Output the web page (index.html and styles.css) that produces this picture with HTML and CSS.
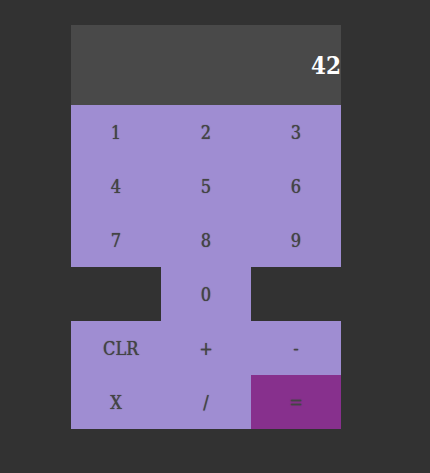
FILE: index.html
```html
<!DOCTYPE html>
<html lang="en">
<head>
<meta charset="utf-8">
<meta name="viewport" content="width=device-width, initial-scale=1">
<title>Calculator</title>
<link rel="stylesheet" href="styles.css">
</head>
<body>
<main class="calculator">
  <output class="display" aria-label="Result">42</output>
  <div class="keys">
    <button class="key" type="button">1</button>
    <button class="key" type="button">2</button>
    <button class="key" type="button">3</button>
    <button class="key" type="button">4</button>
    <button class="key" type="button">5</button>
    <button class="key" type="button">6</button>
    <button class="key" type="button">7</button>
    <button class="key" type="button">8</button>
    <button class="key" type="button">9</button>
    <button class="key key-zero" type="button">0</button>
    <button class="key key-clear" type="button">CLR</button>
    <button class="key" type="button">+</button>
    <button class="key" type="button">-</button>
    <button class="key" type="button">X</button>
    <button class="key" type="button">/</button>
    <button class="key key-equals" type="button">=</button>
  </div>
</main>
</body>
</html>
```
FILE: styles.css
```css
* {
  box-sizing: border-box;
}

body {
  margin: 0;
  padding: 25px 18px 44px 0;
  background: #323232;
  font-family: "Roboto Slab", "DejaVu Serif Condensed", "DejaVu Serif", serif;
}

.calculator {
  width: 66%;
  max-width: 270px;
  margin: 0 auto;
}

.display {
  display: flex;
  align-items: center;
  justify-content: flex-end;
  height: 80px;
  background: #494949;
  color: #ffffff;
  font-size: 24px;
  font-weight: 700;
}

.keys {
  display: grid;
  grid-template-columns: repeat(3, minmax(0, 1fr));
  grid-auto-rows: 54px;
}

.key {
  border: 0;
  padding: 0 32px;
  background: #9f8dd2;
  color: #444444;
  font: inherit;
  font-size: 18px;
  text-shadow: 0 0 1px #444444;
  cursor: pointer;
}

.key-zero {
  grid-column: 2;
}

.key-clear {
  grid-column: 1;
}

.key-equals {
  background: #87308d;
}
```
